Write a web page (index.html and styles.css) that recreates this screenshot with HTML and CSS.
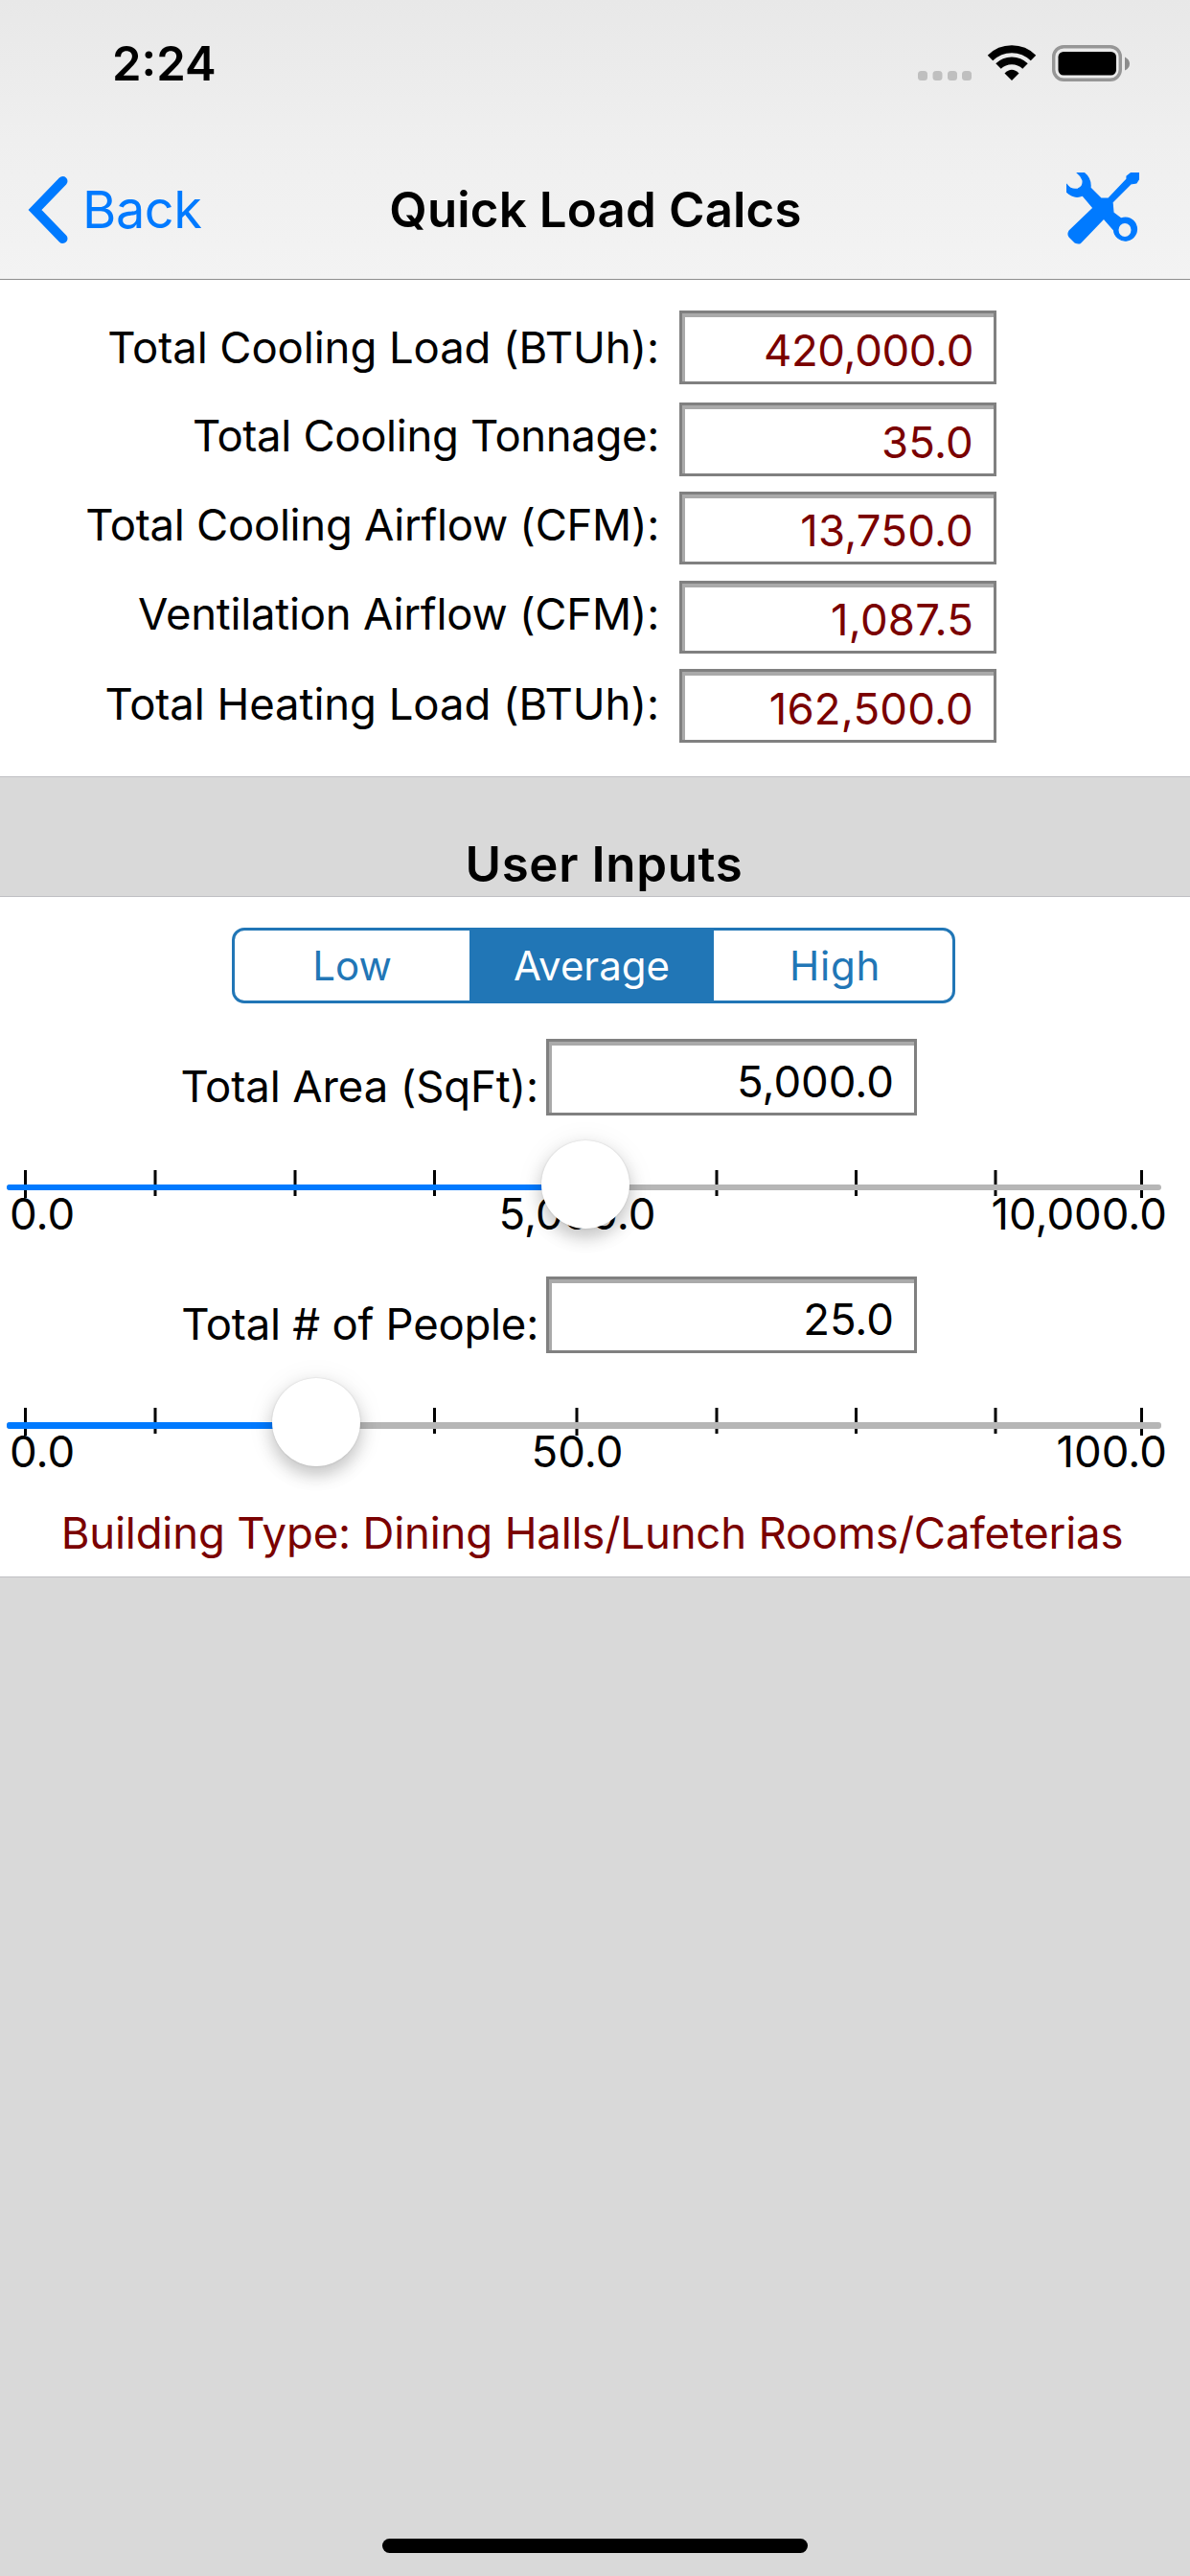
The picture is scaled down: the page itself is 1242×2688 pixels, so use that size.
FILE: index.html
```html
<!DOCTYPE html>
<html lang="en">
<head>
<meta charset="utf-8">
<title>Quick Load Calcs</title>
<link rel="stylesheet" href="styles.css">
</head>
<body>
<header class="header">
  <div class="status">
    <span class="time">2:24</span>
    <svg class="status-icons" width="224" height="42" viewBox="956 45 224 42">
      <g fill="#bfbfbf"><rect x="958" y="74" width="10" height="10" rx="3.5"/><rect x="973.5" y="74" width="10" height="10" rx="3.5"/><rect x="989" y="74" width="10" height="10" rx="3.5"/><rect x="1004" y="74" width="10" height="10" rx="3.5"/></g>
      <g fill="none" stroke="#000" stroke-width="7.8"><path d="M1033.500 60.500A32 32 0 0 1 1078.500 60.500"/><path d="M1042 69A20 20 0 0 1 1070 69"/></g>
      <path d="M1056 84L1048.500 76.500Q1056 69 1063.500 76.500Z"/>
      <rect x="1099.700" y="48.700" width="69.600" height="34.600" rx="10.500" fill="none" stroke="#969696" stroke-width="3.400"/>
      <rect x="1104.500" y="54" width="60.500" height="24.500" rx="5.500"/>
      <path d="M1174 59.500Q1179 62 1179 66.500T1174 73.500Z" fill="#8c8c8c"/>
    </svg>
  </div>
  <nav class="nav">
    <div class="back">
      <svg width="42" height="72" viewBox="29 183 42 72" fill="none" stroke="#007aff" stroke-width="10" stroke-linecap="round" stroke-linejoin="miter"><path d="M65.500 189L36.500 219L65.500 249"/></svg>
      <span class="back-label">Back</span>
    </div>
    <h1 class="title">Quick Load Calcs</h1>
    <svg class="tools" width="76" height="76" viewBox="0 0 76 76" fill="#007aff">
      <path stroke="#007aff" stroke-width="1.200" stroke-linejoin="round" d="M11 0H18Q26 6 25 16L36 27L44 27L63 7V4L68 0H76V6L73 11L67 12L48 31L49 42L57 48A12 12 0 1 1 49.500 60L39 48L15 73Q13 75 9 73L3 67Q1 64 3 61L28 37L17 24Q8 28 0 20V12Q5 19 12 17Q18 15 17 8Q15 3 11 0Z"/>
      <ellipse cx="61" cy="60" rx="6.500" ry="7" fill="#f0f0f0"/>
    </svg>
  </nav>
</header>
<section class="results">
  <div class="result cooling-load"><span class="label">Total Cooling Load (BTUh):</span><span class="field">420,000.0</span></div>
  <div class="result tonnage"><span class="label">Total Cooling Tonnage:</span><span class="field">35.0</span></div>
  <div class="result airflow"><span class="label">Total Cooling Airflow (CFM):</span><span class="field">13,750.0</span></div>
  <div class="result ventilation"><span class="label">Ventilation Airflow (CFM):</span><span class="field">1,087.5</span></div>
  <div class="result heating-load"><span class="label">Total Heating Load (BTUh):</span><span class="field">162,500.0</span></div>
</section>
<h2 class="section-title">User Inputs</h2>
<section class="inputs">
  <div class="segments"><span>Low</span><span class="selected">Average</span><span class="high">High</span></div>
  <div class="input-block">
    <div class="input-row area"><span class="label">Total Area (SqFt):</span><span class="field">5,000.0</span></div>
    <div class="slider">
      <svg width="1242" height="87" viewBox="0 1163 1242 87">
        <path d="M26.500 1221V1250M162 1221V1248M308 1221V1248M453.500 1221V1248M602 1221V1250M748 1221V1248M893.500 1221V1248M1039 1221V1248M1191.500 1221V1250" stroke="#000" stroke-width="3"/>
        <rect x="7" y="1236" width="1205" height="6" rx="3" fill="#b6b6b6"/><rect x="7" y="1236" width="600" height="6" rx="3" fill="#007aff"/>
      </svg>
      <div class="scale"><span>0.0</span><span>5,000.0</span><span>10,000.0</span></div>
      <div class="thumb" style="left:565px"></div>
    </div>
  </div>
  <div class="input-block">
    <div class="input-row people"><span class="label">Total # of People:</span><span class="field">25.0</span></div>
    <div class="slider">
      <svg width="1242" height="87" viewBox="0 1163 1242 87">
        <path d="M26.500 1221V1250M162 1221V1248M308 1221V1248M453.500 1221V1248M602 1221V1250M748 1221V1248M893.500 1221V1248M1039 1221V1248M1191.500 1221V1250" stroke="#000" stroke-width="3"/>
        <rect x="7" y="1236" width="1205" height="7" rx="3" fill="#b6b6b6"/><rect x="7" y="1236" width="310" height="7" rx="3" fill="#007aff"/>
      </svg>
      <div class="scale"><span>0.0</span><span>50.0</span><span>100.0</span></div>
      <div class="thumb" style="left:284px"></div>
    </div>
  </div>
  <p class="building">Building Type: Dining Halls/Lunch Rooms/Cafeterias</p>
</section>
<footer class="home"></footer>
</body>
</html>
```
FILE: styles.css
```css
* { box-sizing: border-box; }
body {
  margin: 0;
  width: 1242px;
  height: 2688px;
  display: flex;
  flex-direction: column;
  overflow: hidden;
  background: #d9d9d9;
  color: #000;
  font: 45.5px/60px Inter, "Liberation Sans", sans-serif;
}
h1, h2, p { margin: 0; }
svg { display: block; flex: none; }

/* Status bar and navigation */
.header {
  height: 292px;
  flex: none;
  background: linear-gradient(#e8e8e8, #efefef 50%, #f3f3f3);
  border-bottom: 1px solid #8e8e8e;
}
.status {
  height: 146px;
  display: flex;
  justify-content: space-between;
  align-items: flex-start;
  padding: 45px 62px 0 117px;
}
.time { font-size: 49px; font-weight: 600; line-height: 42px; padding-top: 1px; }
.nav {
  height: 145px;
  display: grid;
  grid-template-columns: 321px 600px 268px;
  align-items: start;
}
.back { display: flex; align-items: center; padding: 37px 0 0 29px; color: #007aff; }
.back-label { font-size: 54px; padding-left: 15px; letter-spacing: -.4px; }
.title { font-size: 51px; font-weight: 600; text-align: center; padding: 43px 0 0 1px; letter-spacing: .15px; }
.tools { justify-self: end; margin-top: 34px; }

/* Calculated results */
.results { height: 519px; flex: none; background: #fff; padding-top: 32px; border-bottom: 1px solid #c0c0c4; }
.result { display: grid; grid-template-columns: 688px 331px; column-gap: 21px; height: 77px; }
.label { text-align: right; }
.cooling-load .label { padding-top: 9px; letter-spacing: -.1px; }
.tonnage .label { padding-top: 5px; letter-spacing: -.36px; }
.airflow .label { padding-top: 5px; letter-spacing: -.31px; }
.ventilation .label { padding-top: 5px; letter-spacing: -.24px; }
.heating-load .label { padding-top: 7px; letter-spacing: -.08px; }
.tonnage { margin-top: 19px; }
.airflow { margin-top: 16px; height: 76px; }
.ventilation { margin-top: 17px; height: 76px; }
.heating-load { margin-top: 16px; }
.field {
  display: flex;
  align-items: center;
  justify-content: flex-end;
  background: #fff;
  border: 3px solid #808080;
  box-shadow: inset 3px 4px 0 #aaa;
  padding: 6px 21px 0 0;
}
.result .field { color: #7a0000; letter-spacing: .2px; }
.cooling-load .field { letter-spacing: -.35px; }

.section-title {
  height: 125px;
  flex: none;
  padding: 61px 0 0 19px;
  border-bottom: 1px solid #c0c0c4;
  font-size: 51px;
  font-weight: 600;
  line-height: 60px;
  text-align: center;
  letter-spacing: .65px;
}

/* User inputs */
.inputs { height: 710px; flex: none; background: #fff; padding-top: 32px; border-bottom: 1px solid #c0c0c4; }
.segments {
  width: 755px;
  height: 79px;
  margin: 0 0 37px 242px;
  display: grid;
  grid-template-columns: 245px 255px 1fr;
  border: 3px solid #2176b6;
  border-radius: 13px;
  overflow: hidden;
  color: #2176b6;
  font-size: 42px;
  text-align: center;
  line-height: 73px;
}
.selected { background: #2176b6; color: #fff; }
.high { padding-left: 4px; letter-spacing: .8px; }
.input-block { height: 248px; }
.input-row { display: grid; grid-template-columns: 562px 387px; column-gap: 8px; height: 79px; }
.input-row .label { padding-top: 20px; }
.input-row .field { padding-top: 9px; }
.area .label { letter-spacing: -.12px; }
.people .label { letter-spacing: -.25px; }
.slider { position: relative; }
.scale { display: grid; grid-template-columns: 395px 395px 1fr; line-height: 32px; padding: 1px 24px 0 10px; }
.scale span:nth-child(2) { text-align: center; }
.scale span:nth-child(3) { text-align: right; }
.thumb {
  position: absolute;
  top: 27px;
  width: 92px;
  height: 92px;
  border-radius: 50%;
  background: #fff;
  box-shadow: 0 9px 18px rgba(0, 0, 0, .2), 0 3px 30px rgba(0, 0, 0, .08), 0 0 2px rgba(0, 0, 0, .15);
}
.building { text-align: center; line-height: 40px; color: #7a0000; padding-right: 6px; letter-spacing: -.18px; }

.home { width: 444px; height: 15px; border-radius: 8px; background: #000; margin: auto auto 24px 399px; flex: none; }
```
